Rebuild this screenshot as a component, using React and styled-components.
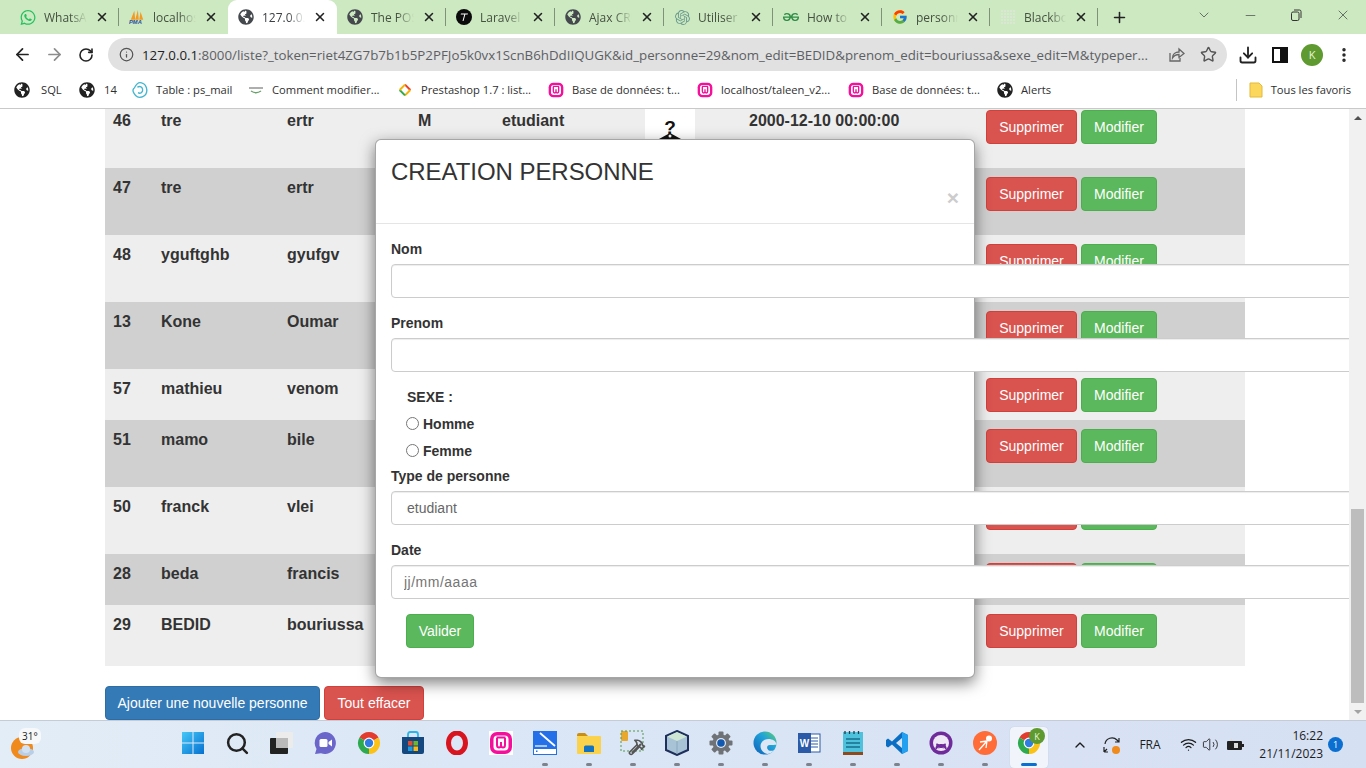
import React from "react";
import styled, { createGlobalStyle } from "styled-components";
import { ArrowLeft, ArrowRight, RotateCw, Info, Star, Download, MoreVertical, ChevronDown, ChevronUp, Minus, X, Plus, Search, Hammer, Volume2, Wifi } from "lucide-react";
import { FaWhatsapp, FaGlobeAmericas, FaGithubAlt } from "react-icons/fa";
import { FcGoogle } from "react-icons/fc";
import { SiOpenai, SiGeeksforgeeks } from "react-icons/si";

const UI = `"Open Sans", "Noto Sans", sans-serif`;
const WEB = `"Liberation Sans", Arial, sans-serif`;

const Global = createGlobalStyle`
  html, body { margin: 0; padding: 0; overflow: hidden; background: #fff; }
  * { box-sizing: border-box; }
`;

const Shell = styled.div`
  width: 1366px; height: 768px; display: flex; flex-direction: column; overflow: hidden;
  font-family: ${WEB}; color: #333;
`;

/* ---------- tab strip ---------- */
const TabStrip = styled.div`
  height: 34px; flex: none; display: flex; align-items: stretch; padding-left: 10px;
  background: #cde9c1; font-family: ${UI}; font-size: 12px; color: #45503f;
`;
const Tab = styled.div`
  position: relative; width: ${p => p.$w || 109}px; flex: none; display: flex; align-items: center; gap: 8px; padding: 0 10px;
  background: ${p => (p.$active ? "#fff" : "transparent")};
  border-radius: ${p => (p.$active ? "9px 9px 0 0" : "0")};
  color: ${p => (p.$active ? "#3c4043" : "inherit")};
  &::after {
    content: ""; display: ${p => (p.$sep ? "block" : "none")}; position: absolute; right: 0; top: 8px; bottom: 8px; width: 1px; background: #7f9177;
  }
`;
const TabIcon = styled.span`
  width: 16px; height: 16px; flex: none; display: flex; align-items: center; justify-content: center;
`;
const TabTitle = styled.span`
  flex: 1; min-width: 0; overflow: hidden; white-space: nowrap;
  -webkit-mask-image: linear-gradient(90deg, #000 60%, transparent 100%);
  mask-image: linear-gradient(90deg, #000 60%, transparent 100%);
`;
const TabClose = styled(X)`
  flex: none; color: #222;
`;
const NewTab = styled.div`
  width: 44px; margin-left: -1px; display: flex; align-items: center; justify-content: center; color: #222;
`;
const WindowControls = styled.div`
  margin-left: auto; display: flex; align-items: center; color: #333; height: 34px;
`;
const WinBtn = styled.div`
  width: 46.4px; height: 34px; display: flex; align-items: center; justify-content: center; padding-bottom: 4px;
`;

/* ---------- address bar ---------- */
const Toolbar = styled.div`
  height: 41px; flex: none; display: flex; align-items: center; padding: 0 6px; background: #fff; color: #2b2b2b;
`;
const ToolBtn = styled.div`
  width: 32px; height: 32px; flex: none; display: flex; align-items: center; justify-content: center;
  color: ${p => p.$color || "#222"};
`;
const UrlBar = styled.div`
  margin-left: 6px; width: 1119px; height: 33px; flex: none; display: flex; align-items: center; padding-left: 11px;
  background: #e1e1e1; border-radius: 17px; font-family: ${UI}; font-size: 13.3px; color: #5c6063; white-space: nowrap; overflow: hidden;
`;
const UrlHost = styled.span` color: #202124; `;
const UrlText = styled.span`
  width: 1016px; margin-left: 8px; flex: none; overflow: hidden;
`;
const UrlActions = styled.div`
  display: flex; align-items: center; margin-left: 2px; color: #555;
`;
const RightTools = styled.div`
  margin-left: 5px; display: flex; align-items: center;
`;
const Avatar = styled.div`
  width: 22px; height: 22px; border-radius: 50%; background: #5e9a30; color: #e8f5d8; font: 11px ${UI};
  display: flex; align-items: center; justify-content: center;
`;

/* ---------- bookmarks ---------- */
const Bookmarks = styled.div`
  height: 34px; flex: none; display: flex; align-items: center; padding: 0 15px 4px 14px; background: #fff; border-bottom: 1px solid #c9c9c9;
  font-family: ${UI}; font-size: 11.2px; color: #2f2f2f;
`;
const Bookmark = styled.div`
  width: ${p => p.$w}px; flex: none; display: flex; align-items: center; gap: ${p => p.$gap || 8}px; white-space: nowrap;
`;
const BookmarkIcon = styled.span`
  width: 16px; height: 16px; flex: none; display: flex; align-items: center; justify-content: center;
`;
const BookmarkEnd = styled.div`
  margin-left: auto; display: flex; align-items: center; height: 22px; border-left: 1px solid #c4c4c4; padding-left: 12px; gap: 8px; white-space: nowrap;
`;

/* ---------- page ---------- */
const Viewport = styled.div`
  flex: 1; min-height: 0; display: flex; background: #fff;
`;
const Main = styled.main`
  position: relative; flex: 1; min-width: 0; overflow: hidden;
`;
const ListTable = styled.table`
  width: 1140px; margin: -8px 0 0 105px; table-layout: fixed; border-collapse: collapse; font-size: 16px; line-height: 24px; font-weight: 700; color: #333;
`;
const Row = styled.tr`
  height: ${p => p.$h}px; background: ${p => (p.$dark ? "#d0d0d0" : "#eee")};
`;
const Cell = styled.td`
  padding: 8px; vertical-align: top; overflow: visible; white-space: nowrap;
`;
const Actions = styled.div`
  display: flex; gap: 4px; margin-top: 1px;
`;
const Btn = styled.button`
  width: ${p => p.$w}px; height: 34px; padding: 0; font: 400 14px/20px ${WEB}; color: #fff; border-radius: 4px; cursor: pointer;
  background: ${p => ({ danger: "#d9534f", success: "#5cb85c", primary: "#337ab7" }[p.$kind])};
  border: 1px solid ${p => ({ danger: "#d43f3a", success: "#4cae4c", primary: "#2e6da4" }[p.$kind])};
`;
const PageButtons = styled.div`
  display: flex; gap: 4px; margin: 20px 0 0 105px;
`;
const Portrait = styled.svg`
  display: block;
`;

/* ---------- modal ---------- */
const Modal = styled.section`
  position: absolute; left: 375px; top: 30px; width: 600px; background: #fff; border: 1px solid rgba(0,0,0,.35); border-radius: 6px;
  box-shadow: 0 5px 15px rgba(0,0,0,.5);
`;
const ModalHeader = styled.header`
  height: 84px; padding: 19px 15px 0; border-bottom: 1px solid #e5e5e5; display: flex; flex-direction: column;
`;
const ModalTitle = styled.h4`
  margin: 0; font: 400 24px/26px ${WEB}; color: #333; letter-spacing: -.05px;
`;
const CloseMark = styled.span`
  align-self: flex-end; margin-top: 2px; font: 700 21px/21px ${WEB}; color: #ccc;
`;
const ModalBody = styled.form`
  padding: 15px 15px 29px; display: flex; flex-direction: column;
`;
const FieldLabel = styled.label`
  display: block; font: 700 14px/20px ${WEB}; color: #333; margin-bottom: 5px;
`;
const Field = styled.input`
  display: block; width: 1000px; height: 34px; padding: 0 ${p => p.$pad || 12}px; margin-bottom: 15px; background: #fff; border: 1px solid #ccc; border-radius: 4px;
  font: 400 14px ${WEB}; color: ${p => p.$color || "#555"}; letter-spacing: ${p => p.$ls || 0}px; box-shadow: inset 0 1px 1px rgba(0,0,0,.075); outline: none;
`;
const SexGroup = styled.div`
  padding-left: 15px; display: flex; flex-direction: column; margin-bottom: 5px;
`;
const SexTitle = styled.div`
  padding-left: 1px; font: 700 14px/20px ${WEB}; color: #333;
`;
const RadioLine = styled.label`
  display: flex; align-items: center; gap: 4px; font: 700 14px/20px ${WEB}; color: #333; margin-top: 7px;
`;
const Radio = styled.input`
  width: 13px; height: 13px; margin: 0 0 2px;
`;
const SubmitWrap = styled.div`
  padding-left: 15px;
`;

/* ---------- scrollbar ---------- */
const Scrollbar = styled.div`
  width: 17px; flex: none; background: #f1f1f1; display: flex; flex-direction: column;
`;
const ScrollArrow = styled.div`
  height: 17px; flex: none; display: flex; align-items: center; justify-content: center; ${p => (p.$top ? "margin-bottom: auto;" : "")}
  &::before {
    content: ""; width: 0; height: 0; border-left: 4px solid transparent; border-right: 4px solid transparent;
    ${p => (p.$top ? "border-bottom: 4px solid #505050;" : "border-top: 4px solid #a3a3a3;")}
  }
`;
const ScrollThumb = styled.div`
  height: 194px; flex: none; margin: 0 2px; background: #bdbdbd;
`;

/* ---------- taskbar ---------- */
const Taskbar = styled.footer`
  height: 48px; flex: none; display: flex; align-items: center; border-top: 1px solid #c6ccd6;
  background: linear-gradient(90deg, #e3edf7 0%, #dbe6f6 35%, #d6e0f3 100%); font-family: ${UI}; color: #1c1c1c;
`;
const Weather = styled.div`
  position: relative; width: 171px; flex: none; height: 47px; display: flex; align-items: center; padding-left: 11px;
`;
const WeatherBadge = styled.span`
  position: absolute; left: 19px; top: 7px; padding: 1px 3px; background: #f7f8fa; border-radius: 6px; font-size: 10px; line-height: 14px; color: #222;
`;
const Apps = styled.div`
  display: flex; height: 47px; flex: none;
`;
const AppSlot = styled.div`
  position: relative; width: 44px; height: 47px; display: flex; align-items: center; justify-content: center; padding-bottom: 3px;
  &::before {
    content: ""; display: ${p => (p.$active ? "block" : "none")}; position: absolute; left: 3px; right: 3px; top: 6px; bottom: 0; background: #f1f5fb; border-radius: 4px; box-shadow: 0 0 1px rgba(0,0,0,.2);
  }
  &::after {
    content: ""; display: ${p => (p.$dot || p.$active ? "block" : "none")}; position: absolute; bottom: 2px; left: 50%;
    width: ${p => (p.$active ? 16 : 6)}px; height: 3px; margin-left: ${p => (p.$active ? -8 : -3)}px; border-radius: 2px;
    background: ${p => (p.$active ? "#0a6fd1" : "#7d838c")};
  }
  & > * { position: relative; }
`;
const AppBadge = styled.span`
  position: absolute; top: 7px; left: 22px; width: 16px; height: 16px; border-radius: 50%; background: #5e9a30; color: #e8f5d8; font-size: 9px; display: flex; align-items: center; justify-content: center;
`;
const Tray = styled.div`
  margin-left: 18px; flex: 1; display: flex; align-items: center; height: 47px; font-size: 12px;
`;
const TrayItem = styled.div`
  width: ${p => p.$w}px; margin-left: ${p => p.$ml || 0}px; flex: none; display: flex; align-items: center; justify-content: center;
`;
const Clock = styled.div`
  width: 70px; flex: none; text-align: right; line-height: 18px; font-size: 12px; white-space: nowrap;
`;
const Notif = styled.div`
  width: 15px; height: 15px; margin-left: 5px; border-radius: 50%; background: #0a6fd1; color: #fff; font-size: 9px; display: flex; align-items: center; justify-content: center;
`;

/* ---------- drawings ---------- */
const Globe = ({ c = "#222", s = 16 }) => <FaGlobeAmericas size={s} color={c} />;
const Wamp = ({ s = 16 }) => (
  <svg width={s} height={s} viewBox="0 0 24 24">
    <rect width="24" height="24" fill="#fff" />
    <rect x="1" y="1" width="22" height="22" rx="7" fill="#f5109b" />
    <rect x="4.500" y="4.500" width="15" height="15" rx="4" fill="#fff" />
    <path d="M7.500 6.500h9M8 7v7q0 2.500 2 2.500t2-2.500v-3 3q0 2.500 2 2.500t2-2.500V7" fill="none" stroke="#f5109b" strokeWidth="2" />
  </svg>
);
const Pma = () => (
  <svg width="18" height="16" viewBox="0 0 18 16">
    <path d="M2 11 6 1l1 10zM7 11l3-11 1 11zM11.500 11 13 2l3 9z" fill="#f29a22" />
    <text x="0" y="16" fontSize="6.500" fontWeight="700" fontStyle="italic" fontFamily="Liberation Sans" fill="#2b4f9a">PMA</text>
  </svg>
);
const LaravelT = () => (
  <svg width="16" height="16" viewBox="0 0 16 16">
    <circle cx="8" cy="8" r="8" fill="#0b0b0b" />
    <path d="M5 4.500h7l-.4 1H9.300L7.500 12H6.500l1.800-6.500H4.700z" fill="#fff" />
  </svg>
);
const Dots = () => (
  <svg width="16" height="16" viewBox="0 0 16 16">
    {[2, 5, 8, 11, 14].flatMap(x => [2, 5, 8, 11, 14].map(y => (
      <circle key={`${x}-${y}`} cx={x} cy={y} r="1" fill="#dde6d8" />
    )))}
  </svg>
);
const Cwebp = () => (
  <svg width="16" height="16" viewBox="0 0 24 24">
    <path d="M12 1C9 1 5 6 3.500 9c-2 1-2.500 4-1.500 6 1 3 5 8 9 8 5 0 10-3 11-8 1-4-1-10-4-12-2-1-4-2-6-2z" fill="none" stroke="#43b5cf" strokeWidth="2" />
    <path d="M8 8c4-3 8 0 8 4s-4 6-7 4" fill="none" stroke="#43b5cf" strokeWidth="2" />
  </svg>
);
const ThemeLogo = () => (
  <svg width="16" height="10" viewBox="0 0 16 10">
    <path d="M1 3h14" stroke="#777" strokeWidth="1.200" />
    <path d="M3 6c3 2 7 2 10 0" stroke="#6ba06b" strokeWidth="1.400" fill="none" />
  </svg>
);
const Presta = () => (
  <svg width="16" height="16" viewBox="0 0 24 24">
    <rect width="24" height="24" fill="#fff" />
    <path d="M12 4 20 12" stroke="#e8412d" strokeWidth="3" />
    <path d="M20 12 12 20" stroke="#f4b400" strokeWidth="3" />
    <path d="M12 20 4 12" stroke="#2eaa4f" strokeWidth="3" />
    <path d="M4 12 12 4" stroke="#f4b400" strokeWidth="3" />
  </svg>
);
const Share = () => (
  <svg width="18" height="18" viewBox="0 0 18 18" fill="none" stroke="#666" strokeWidth="1.300">
    <path d="M3 7v8h10v-3" />
    <path d="M5.500 12c0-4 3-6 6.500-6V3l5 4.500-5 4V8.500c-3 0-5 1-6.500 3.500z" />
  </svg>
);
const SidePanel = () => (
  <svg width="16" height="16" viewBox="0 0 16 16">
    <path d="M1 1h14v14H1z" fill="none" stroke="#111" strokeWidth="2" />
    <rect x="8" y="1" width="7" height="14" fill="#111" />
  </svg>
);
const Restore = () => (
  <svg width="14" height="14" viewBox="0 0 14 14" fill="none" stroke="#333">
    <rect x="2.500" y="4" width="7.500" height="8.500" rx="1.500" />
    <path d="M5 2h5.500A1.500 1.500 0 0 1 12 3.500V10" />
  </svg>
);
const Folder = () => (
  <svg width="14" height="16" viewBox="0 0 14 16">
    <path d="M1 1h9l3 3v11H1z" fill="#fbd75b" stroke="#e5b93a" />
  </svg>
);
const WindowsLogo = () => (
  <svg width="24" height="24" viewBox="0 0 24 24">
    <defs><linearGradient id="wg" x1="0" y1="0" x2="1" y2="1"><stop offset="0" stopColor="#45c8f7" /><stop offset="1" stopColor="#0670d0" /></linearGradient></defs>
    <path d="M1 1h10.500v10.500H1zM12.500 1H23v10.500H12.500zM1 12.500h10.500V23H1zM12.500 12.500H23V23H12.500z" fill="url(#wg)" />
  </svg>
);
const TaskView = () => (
  <svg width="25" height="24" viewBox="0 0 25 24">
    <rect x="1" y="7" width="18" height="16" rx="1" fill="#222" />
    <rect x="7" y="1" width="17" height="16" rx="1" fill="#ececec" />
    <rect x="7" y="7" width="12" height="10" fill="#b9b9b9" />
  </svg>
);
const Meet = () => (
  <svg width="24" height="24" viewBox="0 0 24 24">
    <path d="M12 1a11 11 0 1 1-4 21.300L2 23l1.500-5A11 11 0 0 1 12 1z" fill="#6b66c9" />
    <rect x="6.500" y="8" width="8" height="8" rx="1.500" fill="#fff" />
    <path d="M15.500 11l3.500-2.500v7L15.500 13z" fill="#fff" />
  </svg>
);
const Chrome = ({ s = 24 }) => (
  <svg width={s} height={s} viewBox="0 0 24 24">
    <path d="M12 12 2.470 6.500A11 11 0 0 1 21.530 6.500z" fill="#e33b2e" />
    <path d="M12 12 21.530 6.500A11 11 0 0 1 12 23z" fill="#fbc116" />
    <path d="M12 12 12 23A11 11 0 0 1 2.470 6.500z" fill="#2da94f" />
    <circle cx="12" cy="12" r="5.400" fill="#fff" />
    <circle cx="12" cy="12" r="4.200" fill="#2f7de1" />
  </svg>
);
const Store = () => (
  <svg width="24" height="24" viewBox="0 0 24 24">
    <path d="M7 7V3.500C7 2 8 1 9 1h6c1 0 2 1 2 2.500V7" fill="none" stroke="#29b6e8" strokeWidth="1.800" />
    <path d="M1 6h22v15a2 2 0 0 1-2 2H3a2 2 0 0 1-2-2z" fill="#14487f" />
    <rect x="7" y="10" width="4.500" height="4.500" fill="#e8492d" />
    <rect x="12.500" y="10" width="4.500" height="4.500" fill="#6cb52d" />
    <rect x="7" y="15.500" width="4.500" height="4.500" fill="#1d9ae0" />
    <rect x="12.500" y="15.500" width="4.500" height="4.500" fill="#fbb913" />
  </svg>
);
const Opera = () => (
  <svg width="24" height="24" viewBox="0 0 24 24">
    <ellipse cx="12" cy="12" rx="8.500" ry="10" fill="none" stroke="#d8141f" strokeWidth="5" />
  </svg>
);
const Scanner = () => (
  <svg width="24" height="24" viewBox="0 0 24 24">
    <rect width="24" height="24" fill="#2470e8" />
    <path d="M7 2 22 15" stroke="#fff" strokeWidth="1.800" />
    <path d="M2 15h12" stroke="#fff" strokeWidth="1.200" />
    <rect x="1" y="18" width="22" height="5" fill="#fff" />
    <rect x="3" y="19.500" width="1.500" height="1.500" fill="#2470e8" />
  </svg>
);
const FileFolder = () => (
  <svg width="24" height="24" viewBox="0 0 24 24">
    <path d="M0 4a2 2 0 0 1 2-2h6l3 3h-11z" fill="#c98e12" />
    <rect y="5" width="24" height="18" rx="1" fill="#fbd24c" />
    <path d="M7 16a1.500 1.500 0 0 1 1.500-1.500h7A1.500 1.500 0 0 1 17 16v5H7z" fill="#1273c4" />
  </svg>
);
const Tools = () => (
  <svg width="26" height="26" viewBox="0 0 26 26">
    <rect x="1" y="1" width="7" height="10" rx="1" fill="#e8a82e" />
    <rect x="1" y="1" width="22" height="20" fill="none" stroke="#4f9a4f" strokeDasharray="2 2" />
    <path d="M12 23 21 14" stroke="#555" strokeWidth="2" />
    <foreignObject x="8" y="8" width="18" height="18"><Hammer size={18} color="#555" strokeWidth={2.2} /></foreignObject>
  </svg>
);
const Cube = () => (
  <svg width="24" height="26" viewBox="0 0 24 26">
    <path d="M12 1 23 6v14l-11 5-11-5V6z" fill="#a9c3d6" stroke="#1e2f5c" strokeWidth="2" />
    <path d="M12 2 22 6.500 12 11 2 6.500z" fill="#cfe6d4" />
    <path d="M12 11v13" stroke="#8aa7bd" />
  </svg>
);
const Gear = () => (
  <svg width="24" height="24" viewBox="0 0 24 24">
    {[0, 45, 90, 135, 180, 225, 270, 315].map(a => (
      <rect key={a} x="9.500" y="0.500" width="5" height="6" rx="1" fill="#6f7277" transform={`rotate(${a} 12 12)`} />
    ))}
    <circle cx="12" cy="12" r="8.500" fill="#6f7277" />
    <circle cx="12" cy="12" r="5" fill="#e4e9f2" />
    <circle cx="12" cy="12" r="3.800" fill="#1459b0" />
  </svg>
);
const Edge = () => (
  <svg width="24" height="24" viewBox="0 0 24 24">
    <defs><linearGradient id="eg" x1="0" y1="1" x2="1" y2="0"><stop offset="0" stopColor="#0f5fb8" /><stop offset=".6" stopColor="#20a3d9" /><stop offset="1" stopColor="#5fd06c" /></linearGradient></defs>
    <circle cx="12" cy="12" r="11.500" fill="url(#eg)" />
    <path d="M23.500 14c0-4-4-6-8-6-4.500 0-8 3-8 7 0 4 3 7 7 8 3-.5 5-1.500 7-4-3 1.500-6 1-7-1-1-2 0-4 2-4h3c3 0 4-.5 4-0z" fill="#dce6f5" />
  </svg>
);
const Word = () => (
  <svg width="24" height="24" viewBox="0 0 24 24">
    <rect x="9" y="3" width="14" height="18" fill="#fff" stroke="#2b5aa8" />
    <path d="M12 7h9M12 10h9M12 13h9M12 16h9" stroke="#2b5aa8" />
    <rect x="1" y="2" width="13" height="20" fill="#2b5aa8" />
    <text x="7.500" y="16" textAnchor="middle" fontFamily="Liberation Sans" fontSize="10" fontWeight="700" fill="#fff">W</text>
  </svg>
);
const Notepad = () => (
  <svg width="22" height="26" viewBox="0 0 22 26">
    <rect x="1" y="2" width="20" height="21" fill="#4ec2dc" />
    <path d="M3 1v3M7.500 1v3M12 1v3M16.500 1v3" stroke="#1f3d4c" strokeWidth="1.300" />
    <path d="M4 9h14M4 13h14M4 17h14" stroke="#1a6f8c" strokeWidth="1.500" />
    <rect x="1" y="22" width="20" height="3" fill="#8a4b1f" />
  </svg>
);
const VsCode = () => (
  <svg width="24" height="24" viewBox="0 0 24 24">
    <path d="M17 1 23 4v16l-6 3-10-9.500-4 3L1 15V9l2-1.500 4 3z" fill="#0a6fc4" />
    <path d="M17 1 23 4v16l-6 3z" fill="#23a0ef" />
    <path d="M17 7 11 12l6 5z" fill="#d9e4f5" />
  </svg>
);
const GithubApp = () => (
  <svg width="24" height="24" viewBox="0 0 24 24">
    <circle cx="12" cy="12" r="11.500" fill="#6f2b9a" />
    <circle cx="12" cy="12" r="8" fill="#efe8f5" />
    <foreignObject x="6" y="6" width="12" height="12"><FaGithubAlt size={12} color="#6f2b9a" /></foreignObject>
  </svg>
);
const Postman = () => (
  <svg width="24" height="24" viewBox="0 0 24 24">
    <circle cx="12" cy="12" r="12" fill="#ff6c37" />
    <path d="M6 19 14 10M14 10l-1 7M14 10l-7 1" stroke="#fff" strokeWidth="1.300" fill="none" />
    <circle cx="16" cy="7.500" r="3" fill="#fff" />
  </svg>
);
const WeatherIcon = () => (
  <svg width="24" height="30" viewBox="0 0 24 30">
    <circle cx="11" cy="18" r="11" fill="#f08a1c" />
    <ellipse cx="15" cy="22" rx="8" ry="4" fill="#b9cfe8" />
    <circle cx="15" cy="19" r="4" fill="#d3e2f3" />
  </svg>
);
const SyncTray = () => (
  <svg width="20" height="20" viewBox="0 0 20 20" fill="none" stroke="#222" strokeWidth="1.200">
    <path d="M3 9a7 7 0 0 1 12-4l2 2M17 3v4h-4" />
    <path d="M2 12v5M2 17h4M2 17l3-3" />
    <circle cx="14" cy="15" r="4" fill="#f08a1c" stroke="none" />
  </svg>
);
const Battery = () => (
  <svg width="20" height="16" viewBox="0 0 20 16">
    <rect x="1" y="4" width="15" height="9" rx="1" fill="#222" />
    <rect x="16" y="7" width="2" height="3" fill="#222" />
    <path d="M5 1 4 4h3zM8 6h4v5H8z" fill="#ddd" />
  </svg>
);
const Placeholder = () => (
  <Portrait width="50" height="50" viewBox="0 0 50 50">
    <rect width="50" height="50" fill="#fff" />
    <text x="25" y="25" textAnchor="middle" fontFamily="Liberation Sans" fontWeight="700" fontSize="19" fill="#111">?</text>
    <path d="M25 24l22 12H3z" fill="#111" />
    <circle cx="25" cy="27" r="1.500" fill="#fff" />
  </Portrait>
);

/* ---------- data ---------- */
const tabs = [
  { t: "WhatsApp", i: <FaWhatsapp size={17} color="#25c15f" />, sep: true },
  { t: "localhost", i: <Pma /> },
  { t: "127.0.0.1", i: <Globe c="#45494e" />, active: true },
  { t: "The POS", i: <Globe c="#45494e" />, sep: true },
  { t: "Laravel", i: <LaravelT />, sep: true },
  { t: "Ajax CRUD", i: <Globe c="#45494e" />, sep: true },
  { t: "Utiliser", i: <SiOpenai size={15} color="#6c9c8e" />, sep: true },
  { t: "How to", i: <SiGeeksforgeeks size={16} color="#2f8d46" />, sep: true },
  { t: "personne", i: <FcGoogle size={16} />, sep: true, w: 108 },
  { t: "Blackbox", i: <Dots />, sep: true, w: 108 },
];
const marks = [
  { t: "SQL", i: <Globe />, w: 65, gap: 11 },
  { t: "14", i: <Globe />, w: 53, gap: 9 },
  { t: "Table : ps_mail", i: <Cwebp />, w: 116 },
  { t: "Comment modifier...", i: <ThemeLogo />, w: 149 },
  { t: "Prestashop 1.7 : list...", i: <Presta />, w: 151 },
  { t: "Base de données: t...", i: <Wamp />, w: 149 },
  { t: "localhost/taleen_v2...", i: <Wamp />, w: 151 },
  { t: "Base de données: t...", i: <Wamp />, w: 149 },
  { t: "Alerts", i: <Globe />, w: 60 },
];
const rows = [
  { id: 46, nom: "tre", prenom: "ertr", sexe: "M", type: "etudiant", date: "2000-12-10 00:00:00", img: true, h: 67 },
  { id: 47, nom: "tre", prenom: "ertr", h: 67, dark: true },
  { id: 48, nom: "yguftghb", prenom: "gyufgv", h: 67 },
  { id: 13, nom: "Kone", prenom: "Oumar", h: 67, dark: true },
  { id: 57, nom: "mathieu", prenom: "venom", h: 51 },
  { id: 51, nom: "mamo", prenom: "bile", h: 67, dark: true },
  { id: 50, nom: "franck", prenom: "vlei", h: 67 },
  { id: 28, nom: "beda", prenom: "francis", h: 51, dark: true },
  { id: 29, nom: "BEDID", prenom: "bouriussa", h: 61 },
];
const widths = [48, 126, 131, 84, 143, 104, 237, 267];
const apps = [
  [<WindowsLogo />], [<Search size={25} color="#222" strokeWidth={2.4} />], [<TaskView />], [<Meet />], [<Chrome />], [<Store />], [<Opera />], [<Wamp s={24} />],
  [<Scanner />, 1], [<FileFolder />, 1], [<Tools />, 1], [<Cube />, 1], [<Gear />, 1], [<Edge />, 1], [<Word />, 1], [<Notepad />, 1], [<VsCode />, 1], [<GithubApp />, 1], [<Postman />, 1],
];

export default function App() {
  return (
    <Shell>
      <Global />
      <TabStrip>
        {tabs.map(t => (
          <Tab key={t.t} $active={t.active} $sep={t.sep} $w={t.w}>
            <TabIcon>{t.i}</TabIcon>
            <TabTitle>{t.t}</TabTitle>
            <TabClose size={14} strokeWidth={2.6} />
          </Tab>
        ))}
        <NewTab><Plus size={17} strokeWidth={2.2} /></NewTab>
        <WindowControls>
          <WinBtn><ChevronDown size={16} strokeWidth={1} /></WinBtn>
          <WinBtn><Minus size={15} strokeWidth={1} /></WinBtn>
          <WinBtn><Restore /></WinBtn>
          <WinBtn><X size={16} strokeWidth={1} /></WinBtn>
        </WindowControls>
      </TabStrip>

      <Toolbar>
        <ToolBtn><ArrowLeft size={19} strokeWidth={2.2} /></ToolBtn>
        <ToolBtn $color="#8d8d8d"><ArrowRight size={19} strokeWidth={2.2} /></ToolBtn>
        <ToolBtn><RotateCw size={16} strokeWidth={2.4} /></ToolBtn>
        <UrlBar>
          <Info size={15} color="#555" strokeWidth={2} />
          <UrlText>
            <UrlHost>127.0.0.1</UrlHost>:8000/liste?_token=riet4ZG7b7b1b5P2PFJo5k0vx1ScnB6hDdIIQUGK&id_personne=29&nom_edit=BEDID&prenom_edit=bouriussa&sexe_edit=M&typeper...
          </UrlText>
          <UrlActions>
            <ToolBtn $color="#666"><Share /></ToolBtn>
            <ToolBtn $color="#555"><Star size={17} strokeWidth={2} /></ToolBtn>
          </UrlActions>
        </UrlBar>
        <RightTools>
          <ToolBtn><Download size={20} strokeWidth={2.2} /></ToolBtn>
          <ToolBtn><SidePanel /></ToolBtn>
          <ToolBtn><Avatar>K</Avatar></ToolBtn>
          <ToolBtn><MoreVertical size={18} strokeWidth={2.6} /></ToolBtn>
        </RightTools>
      </Toolbar>

      <Bookmarks>
        {marks.map((m, i) => (
          <Bookmark key={i} $w={m.w} $gap={m.gap}>
            <BookmarkIcon>{m.i}</BookmarkIcon>
            {m.t}
          </Bookmark>
        ))}
        <BookmarkEnd><Folder />Tous les favoris</BookmarkEnd>
      </Bookmarks>

      <Viewport>
        <Main>
          <ListTable>
            <colgroup>{widths.map((w, i) => <col key={i} width={w} />)}</colgroup>
            <tbody>
              {rows.map(r => (
                <Row key={r.id} $h={r.h} $dark={r.dark}>
                  <Cell>{r.id}</Cell>
                  <Cell>{r.nom}</Cell>
                  <Cell>{r.prenom}</Cell>
                  <Cell>{r.sexe}</Cell>
                  <Cell>{r.type}</Cell>
                  <Cell>{r.img && <Placeholder />}</Cell>
                  <Cell>{r.date}</Cell>
                  <Cell>
                    <Actions>
                      <Btn type="button" $kind="danger" $w={91}>Supprimer</Btn>
                      <Btn type="button" $kind="success" $w={76}>Modifier</Btn>
                    </Actions>
                  </Cell>
                  <Cell />
                </Row>
              ))}
            </tbody>
          </ListTable>
          <PageButtons>
            <Btn type="button" $kind="primary" $w={215}>Ajouter une nouvelle personne</Btn>
            <Btn type="button" $kind="danger" $w={100}>Tout effacer</Btn>
          </PageButtons>

          <Modal>
            <ModalHeader>
              <ModalTitle>CREATION PERSONNE</ModalTitle>
              <CloseMark>×</CloseMark>
            </ModalHeader>
            <ModalBody>
              <FieldLabel>Nom</FieldLabel>
              <Field type="text" />
              <FieldLabel>Prenom</FieldLabel>
              <Field type="text" />
              <SexGroup>
                <SexTitle>SEXE :</SexTitle>
                <RadioLine><Radio type="radio" name="sexe" />Homme</RadioLine>
                <RadioLine><Radio type="radio" name="sexe" />Femme</RadioLine>
              </SexGroup>
              <FieldLabel>Type de personne</FieldLabel>
              <Field type="text" readOnly value="etudiant" $pad={15} $color="#666" />
              <FieldLabel>Date</FieldLabel>
              <Field type="text" readOnly value="jj/mm/aaaa" $color="#757575" $ls={0.5} />
              <SubmitWrap><Btn type="button" $kind="success" $w={68}>Valider</Btn></SubmitWrap>
            </ModalBody>
          </Modal>
        </Main>
        <Scrollbar>
          <ScrollArrow $top />
          <ScrollThumb />
          <ScrollArrow />
        </Scrollbar>
      </Viewport>

      <Taskbar>
        <Weather>
          <WeatherIcon />
          <WeatherBadge>31°</WeatherBadge>
        </Weather>
        <Apps>
          {apps.map(([icon, dot], i) => <AppSlot key={i} $dot={dot}>{icon}</AppSlot>)}
          <AppSlot $active><Chrome /><AppBadge>K</AppBadge></AppSlot>
        </Apps>
        <Tray>
          <TrayItem $w={22}><ChevronUp size={16} strokeWidth={2} /></TrayItem>
          <TrayItem $w={42}><SyncTray /></TrayItem>
          <TrayItem $w={34}>FRA</TrayItem>
          <TrayItem $w={26} $ml={8}><Wifi size={17} strokeWidth={1.8} /></TrayItem>
          <TrayItem $w={18}><Volume2 size={17} strokeWidth={1.2} /></TrayItem>
          <TrayItem $w={34}><Battery /></TrayItem>
          <Clock>16:22<br />21/11/2023</Clock>
          <Notif>1</Notif>
        </Tray>
      </Taskbar>
    </Shell>
  );
}
